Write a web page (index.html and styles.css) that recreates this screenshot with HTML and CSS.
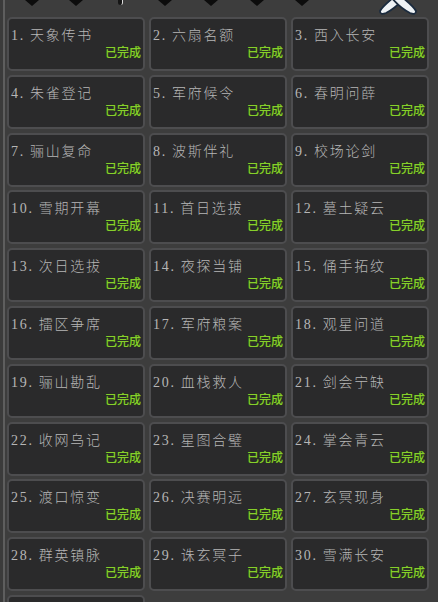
FILE: index.html
```html
<!DOCTYPE html>
<html>
<head>
<meta charset="utf-8">
<link rel="stylesheet" href="styles.css">
</head>
<body>
<div class="panel">
  <div class="topbar">
    <span class="tri t1"></span><span class="tri t2"></span><span class="knob"></span><span class="tri t4"></span><span class="tri t5"></span><span class="tri t6"></span><span class="tri t7"></span>
    <svg class="close" width="52" height="16" viewBox="0 0 52 16">
      <path d="M22 -3 L33 -3 Q24 8 14 13 Q8 15.5 8 11 Q10 7 22 -3 Z" fill="#eef2f5" stroke="#1b2b3e" stroke-width="1.8" stroke-linejoin="round"/>
      <path d="M30 -3 L19 -3 Q28 8 38 13 Q44 15.5 44 11 Q42 7 30 -3 Z" fill="#eef2f5" stroke="#1b2b3e" stroke-width="1.8" stroke-linejoin="round"/>
    </svg>
  </div>
  <div class="grid">
    <div class="cell"><div class="title">1. 天象传书</div><div class="status">已完成</div></div>
    <div class="cell"><div class="title">2. 六扇名额</div><div class="status">已完成</div></div>
    <div class="cell"><div class="title">3. 西入长安</div><div class="status">已完成</div></div>
    <div class="cell"><div class="title">4. 朱雀登记</div><div class="status">已完成</div></div>
    <div class="cell"><div class="title">5. 军府候令</div><div class="status">已完成</div></div>
    <div class="cell"><div class="title">6. 春明问薛</div><div class="status">已完成</div></div>
    <div class="cell"><div class="title">7. 骊山复命</div><div class="status">已完成</div></div>
    <div class="cell"><div class="title">8. 波斯伴礼</div><div class="status">已完成</div></div>
    <div class="cell"><div class="title">9. 校场论剑</div><div class="status">已完成</div></div>
    <div class="cell"><div class="title">10. 雪期开幕</div><div class="status">已完成</div></div>
    <div class="cell"><div class="title">11. 首日选拔</div><div class="status">已完成</div></div>
    <div class="cell"><div class="title">12. 墓土疑云</div><div class="status">已完成</div></div>
    <div class="cell"><div class="title">13. 次日选拔</div><div class="status">已完成</div></div>
    <div class="cell"><div class="title">14. 夜探当铺</div><div class="status">已完成</div></div>
    <div class="cell"><div class="title">15. 俑手拓纹</div><div class="status">已完成</div></div>
    <div class="cell"><div class="title">16. 擂区争席</div><div class="status">已完成</div></div>
    <div class="cell"><div class="title">17. 军府粮案</div><div class="status">已完成</div></div>
    <div class="cell"><div class="title">18. 观星问道</div><div class="status">已完成</div></div>
    <div class="cell"><div class="title">19. 骊山勘乱</div><div class="status">已完成</div></div>
    <div class="cell"><div class="title">20. 血栈救人</div><div class="status">已完成</div></div>
    <div class="cell"><div class="title">21. 剑会宁缺</div><div class="status">已完成</div></div>
    <div class="cell"><div class="title">22. 收网乌记</div><div class="status">已完成</div></div>
    <div class="cell"><div class="title">23. 星图合璧</div><div class="status">已完成</div></div>
    <div class="cell"><div class="title">24. 掌会青云</div><div class="status">已完成</div></div>
    <div class="cell"><div class="title">25. 渡口惊变</div><div class="status">已完成</div></div>
    <div class="cell"><div class="title">26. 决赛明远</div><div class="status">已完成</div></div>
    <div class="cell"><div class="title">27. 玄冥现身</div><div class="status">已完成</div></div>
    <div class="cell"><div class="title">28. 群英镇脉</div><div class="status">已完成</div></div>
    <div class="cell"><div class="title">29. 诛玄冥子</div><div class="status">已完成</div></div>
    <div class="cell"><div class="title">30. 雪满长安</div><div class="status">已完成</div></div>
    <div class="cell"></div>
  </div>
</div>
</body>
</html>
```
FILE: styles.css
```css
* { box-sizing: border-box; }
html, body { margin: 0; padding: 0; }
body {
  width: 438px;
  height: 602px;
  overflow: hidden;
  background: #3b3b3b;
}
.panel {
  position: relative;
  height: 602px;
  overflow: hidden;
  margin-left: 3px;
  border-left: 2px solid #5e5e5e;
  background: #3d3d3d;
}
.topbar {
  position: relative;
  height: 17px;
}
.tri {
  position: absolute;
  top: 0;
  width: 0; height: 0;
  border-left: 7px solid transparent;
  border-right: 7px solid transparent;
  border-top: 6px solid #0c0c0c;
}
.t1 { left: 20px; }
.t2 { left: 64px; }
.t4 { left: 153px; }
.t5 { left: 199px; }
.t6 { left: 245px; }
.t7 { left: 290px; }
.knob {
  position: absolute;
  top: 0; left: 113px;
  width: 5px; height: 5px;
  border-radius: 0 0 3px 3px;
  background: #151515;
  border-right: 1px solid #ddd;
}
.close {
  position: absolute;
  top: 0; left: 367px;
}
.grid {
  display: grid;
  grid-template-columns: repeat(3, 138px);
  grid-auto-rows: 54px;
  column-gap: 4px;
  row-gap: 3.8px;
  padding-left: 2px;
}
.cell {
  position: relative;
  background: #2a2a2b;
  border: 2px solid #4d4d4f;
  border-radius: 5px;
  padding: 8px 2px 0 2px;
  display: flex;
  flex-direction: column;
}
.title {
  font-family: "Liberation Serif", "Noto Sans CJK SC", serif;
  font-size: 14px;
  line-height: 18px;
  letter-spacing: 1.7px;
  color: #b6b6b6;
  font-weight: 300;
  white-space: nowrap;
}
.status {
  align-self: flex-end;
  margin-top: -1px;
  font-family: "Noto Sans CJK SC", sans-serif;
  font-size: 12px;
  line-height: 16px;
  font-weight: 500;
  color: #86cf2c;
  text-shadow: 0 0 1px #2b4a08;
}
```
